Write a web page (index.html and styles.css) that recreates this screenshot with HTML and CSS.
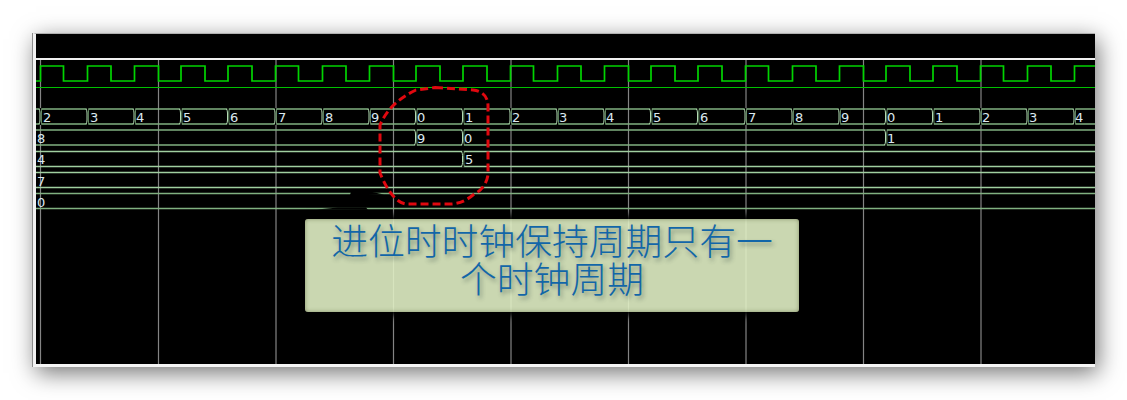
FILE: index.html
```html
<!DOCTYPE html>
<html lang="zh-CN">
<head>
    <meta charset="UTF-8">
    <title>进位时时钟保持周期</title>
    <link rel="stylesheet" href="styles.css">
</head>
<body>

<div class="frame">
    <div class="topbar"></div>
    <div class="wave-area">
        <svg class="wave" viewBox="36 60 1059 304" width="1059" height="304">
            <defs>
                <g id="tick">
                    <rect x="-0.800" y="-1" width="1.600" height="17" fill="#000" stroke="none"></rect>
                    <path d="M-1.500 0Q-0.500 1.500-0.500 4V11Q-0.500 13.500-1.500 15"></path>
                    <path class="tick-dim" d="M1.500 0Q0.800 1.500 0.800 4V11Q0.800 13.500 1.500 15"></path>
                </g>
            </defs>

            <path class="grid" d="M40.500 60V364M158.500 60V364M276 60V364M393.500 60V364M511 60V364M628.500 60V364M746 60V364M863.500 60V364M981 60V364"></path>

            <path class="clock" d="M36 81H40.500V66H63.500V81H87.500V66H111V81H134.500V66H158.500V81H181V66H205V81H228V66H252V81H275.500V66H298.500V81H322.500V66H346V81H369.500V66H393.500V81H416V66H440V81H463V66H487V81H510.500V66H533.500V81H557.500V66H581V81H604.500V66H628.500V81H651V66H675V81H698V66H722V81H745.500V66H768.500V81H792.500V66H816V81H839.500V66H863.500V81H886V66H910V81H933V66H957V81H980.500V66H1003.500V81H1027.500V66H1051V81H1074.500V66H1095"></path>
            <path class="clock-base" d="M36 87.500H1095"></path>

            <!-- buses: top and bottom rail -->
            <path class="bus" d="M36 109H1095M36 124H1095"></path>
            <path class="bus" d="M36 130H1095M36 145H1095"></path>
            <path class="bus light" d="M36 151.500H1095M36 166.500H1095"></path>
            <path class="bus light" d="M36 172.500H1095M36 187.500H1095"></path>
            <path class="bus" d="M36 193.500H1095M36 208.500H1095"></path>

            <g class="ticks">
                <use href="#tick" x="40.500" y="109"></use>
                <use href="#tick" x="87.500" y="109"></use>
                <use href="#tick" x="134.500" y="109"></use>
                <use href="#tick" x="181" y="109"></use>
                <use href="#tick" x="228" y="109"></use>
                <use href="#tick" x="275.500" y="109"></use>
                <use href="#tick" x="322.500" y="109"></use>
                <use href="#tick" x="369.500" y="109"></use>
                <use href="#tick" x="416" y="109"></use>
                <use href="#tick" x="463" y="109"></use>
                <use href="#tick" x="510.500" y="109"></use>
                <use href="#tick" x="557.500" y="109"></use>
                <use href="#tick" x="604.500" y="109"></use>
                <use href="#tick" x="651" y="109"></use>
                <use href="#tick" x="698" y="109"></use>
                <use href="#tick" x="745.500" y="109"></use>
                <use href="#tick" x="792.500" y="109"></use>
                <use href="#tick" x="839.500" y="109"></use>
                <use href="#tick" x="886" y="109"></use>
                <use href="#tick" x="933" y="109"></use>
                <use href="#tick" x="980.500" y="109"></use>
                <use href="#tick" x="1027.500" y="109"></use>
                <use href="#tick" x="1074.500" y="109"></use>
                <use href="#tick" x="416" y="130"></use>
                <use href="#tick" x="463" y="130"></use>
                <use href="#tick" x="886" y="130"></use>
                <use href="#tick" x="463" y="151.500"></use>
            </g>

            <g class="digits">
                <text x="43" y="122">2</text>
                <text x="90" y="122">3</text>
                <text x="136" y="122">4</text>
                <text x="183" y="122">5</text>
                <text x="230" y="122">6</text>
                <text x="278" y="122">7</text>
                <text x="325" y="122">8</text>
                <text x="371" y="122">9</text>
                <text x="417" y="122">0</text>
                <text x="465" y="122">1</text>
                <text x="512" y="122">2</text>
                <text x="559" y="122">3</text>
                <text x="606" y="122">4</text>
                <text x="653" y="122">5</text>
                <text x="700" y="122">6</text>
                <text x="748" y="122">7</text>
                <text x="795" y="122">8</text>
                <text x="841" y="122">9</text>
                <text x="887" y="122">0</text>
                <text x="935" y="122">1</text>
                <text x="982" y="122">2</text>
                <text x="1029" y="122">3</text>
                <text x="1075" y="122">4</text>

                <text x="37" y="143">8</text>
                <text x="417" y="143">9</text>
                <text x="464" y="143">0</text>
                <text x="887" y="143">1</text>

                <text x="37" y="164">4</text>
                <text x="465" y="164">5</text>

                <text x="37" y="186">7</text>
                <text x="37" y="207">0</text>
            </g>

            <!-- dark wedge lying over the lower rails -->
            <path class="wedge" d="M350 195L351 191.500H370L384 194.500L368 195ZM317 209.500L338 207.500H366L368 209.800Z"></path>

            <path class="ring" d="M435 87.500L473 90Q488 92 488 106V175Q486 188 473 195Q462 204 450 204H406Q392 202 380 173V125Q390 102 416 90Z"></path>
        </svg>

        <div class="callout">进位时时钟保持周期只有一个时钟周期</div>
    </div>
</div>

</body>
</html>
```

FILE: styles.css
```css
html, body {
    margin: 0;
    height: 400px;
    overflow: hidden;
    background: #fff;
}
.frame {
    width: 1059px;
    margin: 33px 0 0 33px;
    background: #000;
    border-top: 1px solid #b0b0b0;
    border-left: 3px solid #f2f2f2;
    border-bottom: 3px solid #f6f6f6;
    box-shadow: -1px 0 0 #8c8c8c, 3px 6px 22px rgba(0, 0, 0, 0.55);
}
.topbar {
    height: 24px;
    border-bottom: 2px solid #f0f0f0;
}
.wave-area {
    position: relative;
    height: 304px;
}
.wave {
    display: block;
}
.grid {
    fill: none;
    stroke: #848484;
    stroke-width: 1.2;
}
.clock {
    fill: none;
    stroke: #00d400;
    stroke-width: 1.7;
}
.clock-base {
    stroke: #00c000;
    stroke-width: 1.2;
}
.bus {
    stroke: #80b080;
    stroke-width: 1.7;
}
.bus.light {
    stroke: #a0cfa0;
}
.ticks {
    fill: none;
    stroke: #b4dcb4;
    stroke-width: 1;
}
.tick-dim {
    stroke: #6f9c6f;
}
.digits {
    font-family: "DejaVu Sans", sans-serif;
    font-size: 13px;
    fill: #dce8f0;
}
.wedge {
    fill: #000;
}
.ring {
    fill: none;
    stroke: #e0080f;
    stroke-width: 3;
    stroke-dasharray: 8 4;
}
.callout {
    position: absolute;
    left: 269px;
    top: 159px;
    width: 450px;
    height: 92px;
    padding: 1px 22px 0;
    border-radius: 3px;
    background: rgba(224, 238, 196, 0.9);
    box-shadow: 0 0 6px 4px #000, inset 0 0 4px rgba(90, 100, 60, 0.6);
    color: #1266a8;
    font-family: "Noto Sans CJK SC", sans-serif;
    font-size: 36.800px;
    font-weight: 300;
    line-height: 38px;
    text-align: center;
    text-shadow: 2px 3px 4px rgba(40, 60, 60, 0.45);
}
```
